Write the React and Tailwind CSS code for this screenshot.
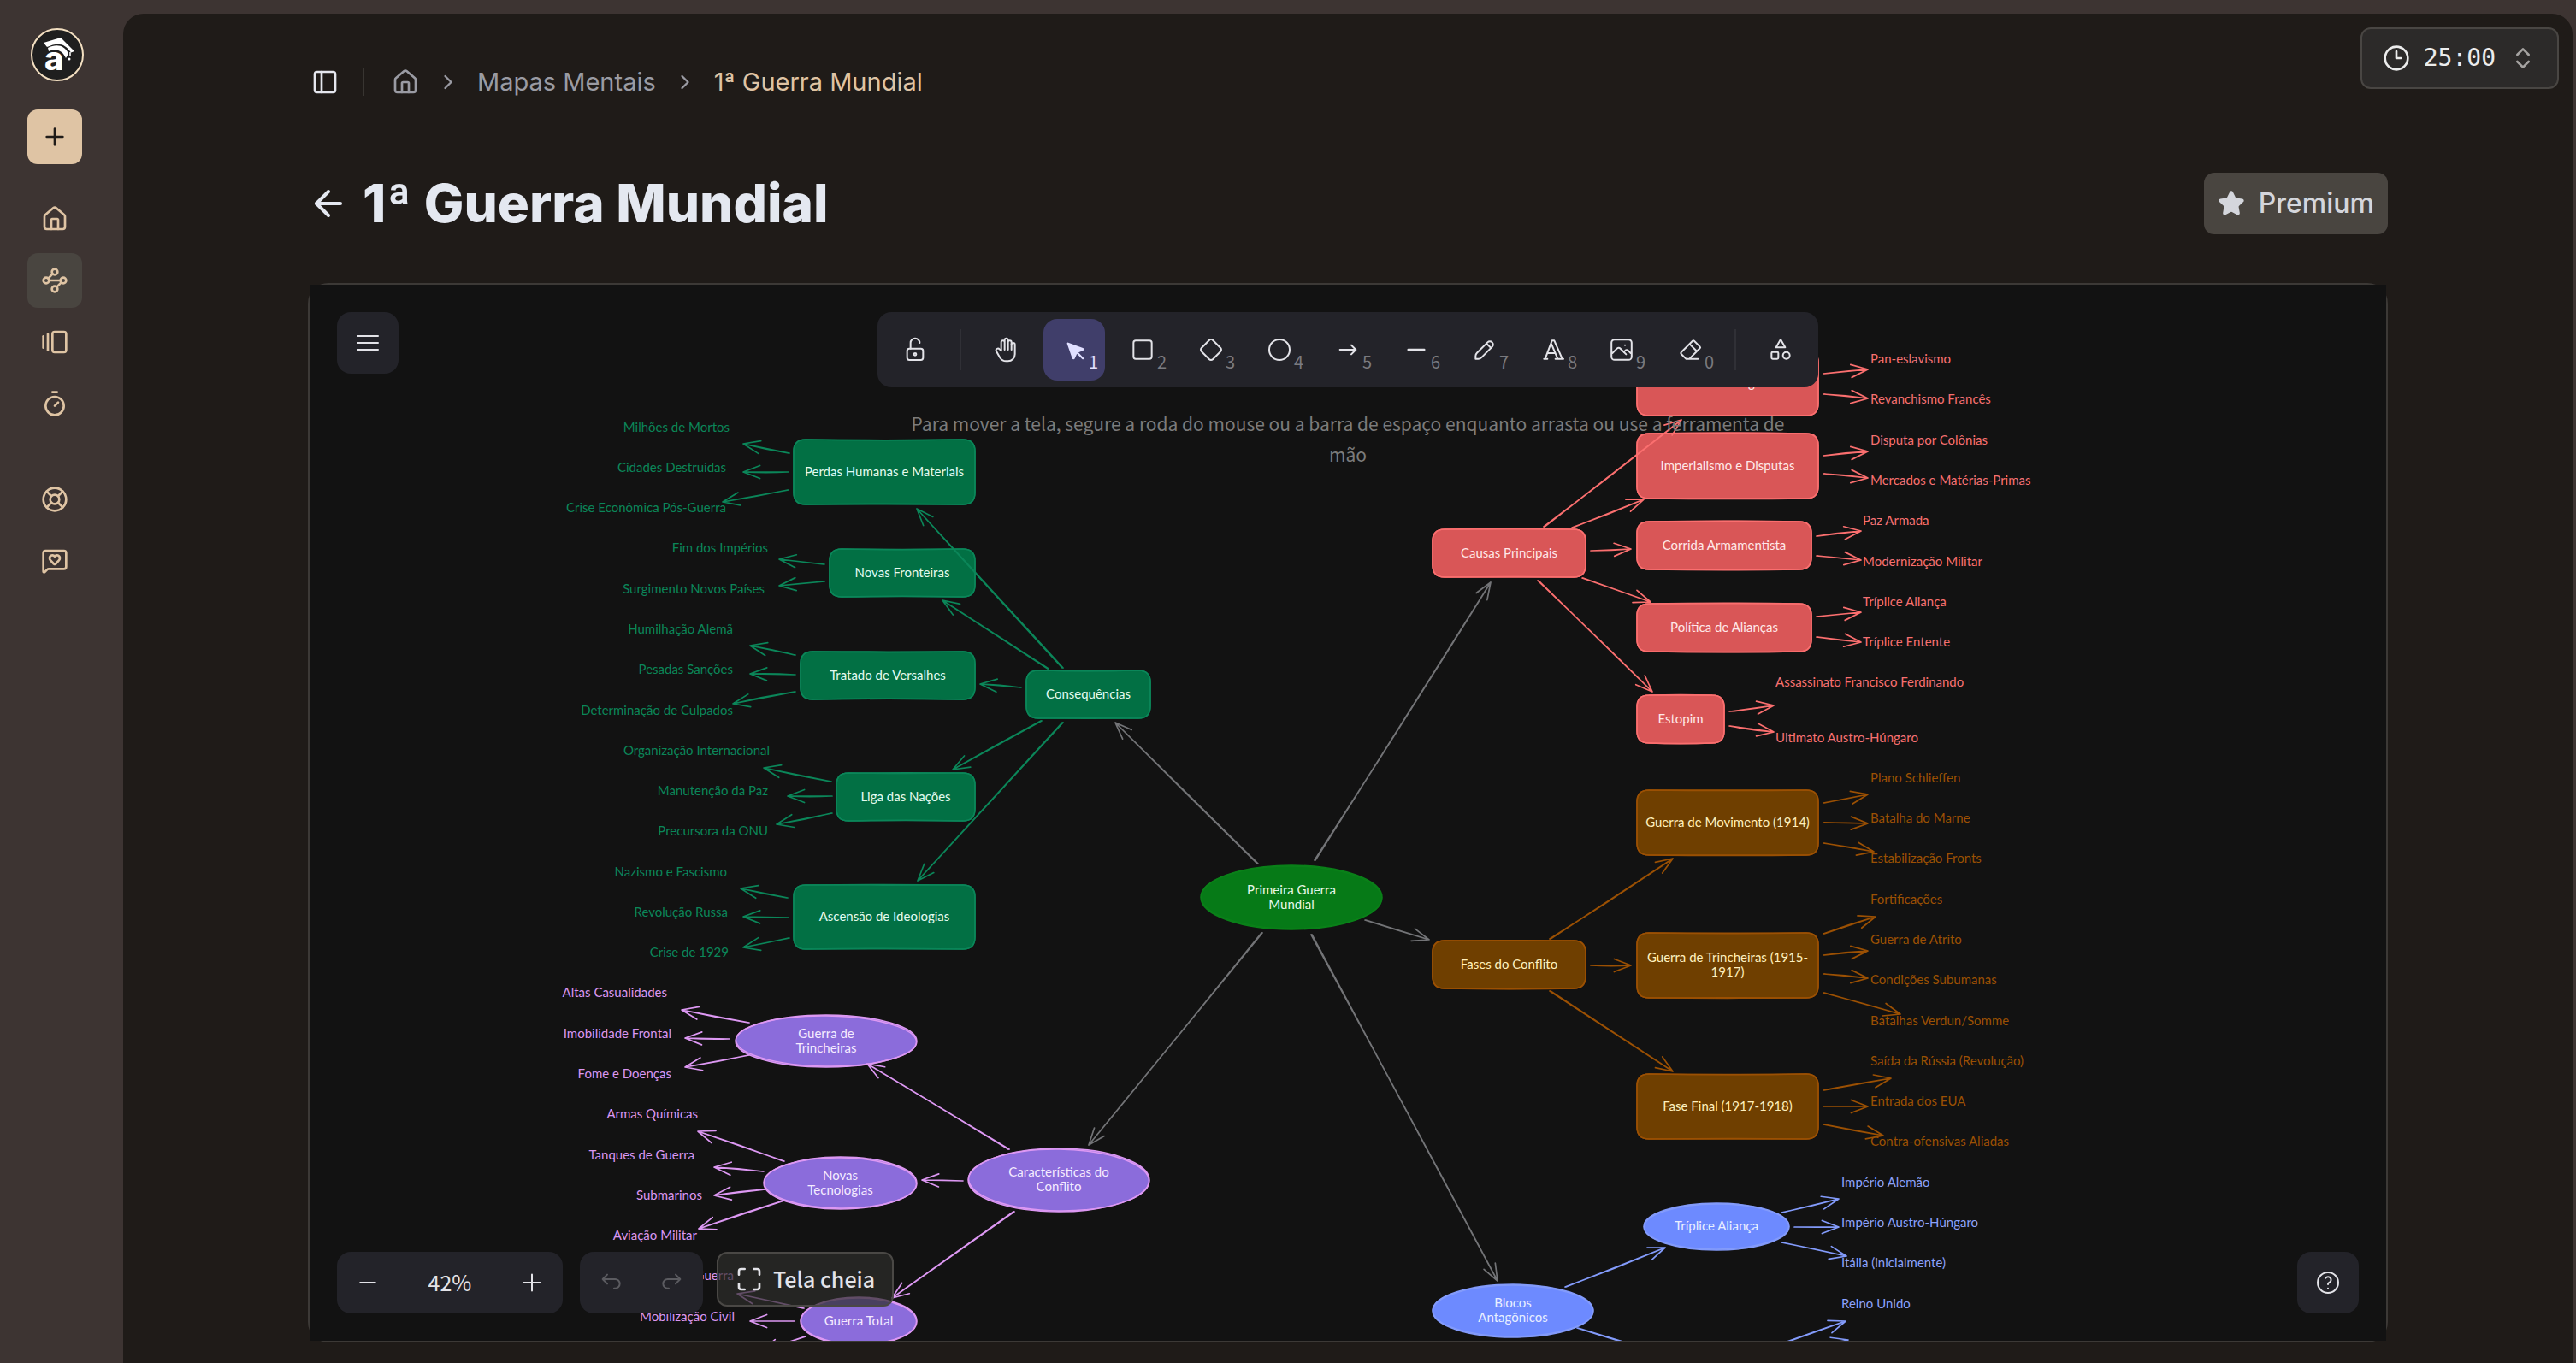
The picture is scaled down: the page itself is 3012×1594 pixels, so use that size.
import React, { useState } from 'react';
import {
  ArrowLeft,
  ChevronRight,
  ChevronsUpDown,
  Clock3,
  GalleryHorizontalEnd,
  House,
  LifeBuoy,
  Maximize,
  MessageSquareHeart,
  PanelLeft,
  Plus,
  Star,
  Timer,
  Waypoints
} from 'lucide-react';

const THEMES = {
  root: { fill: '#067a17', stroke: '#0a8019', text: 'text-[#e6f7e8]', label: 'text-[#0a8019]' },
  gray: { fill: 'none', stroke: '#737477', text: 'text-white', label: 'text-white' },
  green: { fill: '#027044', stroke: '#0b8659', text: 'text-[#e3fbf0]', label: 'text-[#0b8659]' },
  red: { fill: '#d95657', stroke: '#fb6f6f', text: 'text-[#ffe8e8]', label: 'text-[#f77070]' },
  brown: { fill: '#6f3f00', stroke: '#9b5003', text: 'text-[#fff0bd]', label: 'text-[#9b5003]' },
  purple: { fill: '#8b6cdb', stroke: '#dd98f3', text: 'text-[#f5ebff]', label: 'text-[#d996f0]' },
  blue: { fill: '#6d8aff', stroke: '#839bfb', text: 'text-[#e9efff]', label: 'text-[#8ba1fb]' }
};

// Scene coordinates: x, y, width, height
const NODES = [
  { shape: 'ellipse', theme: 'root', box: [1404, 1012, 212, 75], lines: ['Primeira Guerra', 'Mundial'] },

  { shape: 'rect', theme: 'green', box: [1200, 784, 145, 56], lines: ['Consequências'] },
  { shape: 'rect', theme: 'green', box: [928, 514, 212, 76], lines: ['Perdas Humanas e Materiais'] },
  { shape: 'rect', theme: 'green', box: [970, 642, 170, 56], lines: ['Novas Fronteiras'] },
  { shape: 'rect', theme: 'green', box: [936, 762, 204, 56], lines: ['Tratado de Versalhes'] },
  { shape: 'rect', theme: 'green', box: [978, 904, 162, 56], lines: ['Liga das Nações'] },
  { shape: 'rect', theme: 'green', box: [928, 1035, 212, 75], lines: ['Ascensão de Ideologias'] },

  { shape: 'rect', theme: 'red', box: [1675, 619, 179, 56], lines: ['Causas Principais'] },
  { shape: 'rect', theme: 'red', box: [1914, 410, 212, 76], lines: ['Nacionalismo Agressivo'] },
  { shape: 'rect', theme: 'red', box: [1914, 507, 212, 76], lines: ['Imperialismo e Disputas'] },
  { shape: 'rect', theme: 'red', box: [1914, 610, 204, 56], lines: ['Corrida Armamentista'] },
  { shape: 'rect', theme: 'red', box: [1914, 706, 204, 56], lines: ['Política de Alianças'] },
  { shape: 'rect', theme: 'red', box: [1914, 813, 102, 56], lines: ['Estopim'] },

  { shape: 'rect', theme: 'brown', box: [1675, 1100, 179, 56], lines: ['Fases do Conflito'] },
  { shape: 'rect', theme: 'brown', box: [1914, 924, 212, 76], lines: ['Guerra de Movimento (1914)'] },
  { shape: 'rect', theme: 'brown', box: [1914, 1091, 212, 76], lines: ['Guerra de Trincheiras (1915-', '1917)'] },
  { shape: 'rect', theme: 'brown', box: [1914, 1256, 212, 76], lines: ['Fase Final (1917-1918)'] },

  { shape: 'ellipse', theme: 'purple', box: [1132, 1343, 212, 74], lines: ['Características do', 'Conflito'] },
  { shape: 'ellipse', theme: 'purple', box: [860, 1187, 212, 61], lines: ['Guerra de', 'Trincheiras'] },
  { shape: 'ellipse', theme: 'purple', box: [893, 1353, 179, 61], lines: ['Novas', 'Tecnologias'] },
  { shape: 'ellipse', theme: 'purple', box: [936, 1517, 136, 56], lines: ['Guerra Total'] },

  { shape: 'ellipse', theme: 'blue', box: [1675, 1502, 188, 62], lines: ['Blocos', 'Antagônicos'] },
  { shape: 'ellipse', theme: 'blue', box: [1922, 1407, 170, 55], lines: ['Tríplice Aliança'] }
];

// Left branches are anchored on their right edge, right branches on their left edge
const LEFT_LABELS = [
  ['green', 853, 500, 'Milhões de Mortos'],
  ['green', 849, 547, 'Cidades Destruídas'],
  ['green', 849, 594, 'Crise Econômica Pós-Guerra'],
  ['green', 898, 641, 'Fim dos Impérios'],
  ['green', 894, 689, 'Surgimento Novos Países'],
  ['green', 857, 736, 'Humilhação Alemã'],
  ['green', 857, 783, 'Pesadas Sanções'],
  ['green', 857, 831, 'Determinação de Culpados'],
  ['green', 900, 878, 'Organização Internacional'],
  ['green', 898, 925, 'Manutenção da Paz'],
  ['green', 898, 972, 'Precursora da ONU'],
  ['green', 850, 1020, 'Nazismo e Fascismo'],
  ['green', 851, 1067, 'Revolução Russa'],
  ['green', 852, 1114, 'Crise de 1929'],
  ['purple', 780, 1161, 'Altas Casualidades'],
  ['purple', 785, 1209, 'Imobilidade Frontal'],
  ['purple', 785, 1256, 'Fome e Doenças'],
  ['purple', 816, 1303, 'Armas Químicas'],
  ['purple', 812, 1351, 'Tanques de Guerra'],
  ['purple', 821, 1398, 'Submarinos'],
  ['purple', 815, 1445, 'Aviação Militar'],
  ['purple', 858, 1492, 'Economia de Guerra'],
  ['purple', 859, 1540, 'Mobilização Civil']
];

const RIGHT_LABELS = [
  ['red', 2187, 420, 'Pan-eslavismo'],
  ['red', 2187, 467, 'Revanchismo Francês'],
  ['red', 2187, 515, 'Disputa por Colônias'],
  ['red', 2187, 562, 'Mercados e Matérias-Primas'],
  ['red', 2178, 609, 'Paz Armada'],
  ['red', 2178, 657, 'Modernização Militar'],
  ['red', 2178, 704, 'Tríplice Aliança'],
  ['red', 2178, 751, 'Tríplice Entente'],
  ['red', 2076, 798, 'Assassinato Francisco Ferdinando'],
  ['red', 2076, 863, 'Ultimato Austro-Húngaro'],
  ['brown', 2187, 910, 'Plano Schlieffen'],
  ['brown', 2187, 957, 'Batalha do Marne'],
  ['brown', 2187, 1004, 'Estabilização Fronts'],
  ['brown', 2187, 1052, 'Fortificações'],
  ['brown', 2187, 1099, 'Guerra de Atrito'],
  ['brown', 2187, 1146, 'Condições Subumanas'],
  ['brown', 2187, 1194, 'Batalhas Verdun/Somme'],
  ['brown', 2187, 1241, 'Saída da Rússia (Revolução)'],
  ['brown', 2187, 1288, 'Entrada dos EUA'],
  ['brown', 2187, 1335, 'Contra-ofensivas Aliadas'],
  ['blue', 2153, 1383, 'Império Alemão'],
  ['blue', 2153, 1430, 'Império Austro-Húngaro'],
  ['blue', 2153, 1477, 'Itália (inicialmente)'],
  ['blue', 2153, 1525, 'Reino Unido']
];

// [x1, y1, x2, y2], the arrow head sits on the second point
const ARROWS = {
  gray: [
    [1470, 1010, 1304, 845],
    [1537, 1006, 1743, 681],
    [1596, 1076, 1671, 1099],
    [1533, 1093, 1751, 1498],
    [1475, 1091, 1273, 1339]
  ],
  green: [
    [922, 530, 869, 519], [921, 552, 869, 552], [921, 573, 845, 587],
    [963, 660, 911, 654], [963, 680, 911, 685],
    [929, 766, 877, 755], [929, 789, 877, 788], [929, 809, 857, 823],
    [1193, 804, 1146, 800], [1225, 782, 1102, 702], [1242, 781, 1072, 595],
    [1217, 843, 1114, 900], [1242, 845, 1073, 1030],
    [971, 914, 893, 898], [972, 931, 921, 931], [972, 951, 908, 964],
    [920, 1050, 866, 1039], [921, 1073, 869, 1072], [922, 1097, 869, 1108]
  ],
  red: [
    [1805, 616, 1966, 491], [1838, 617, 1922, 584], [1860, 644, 1907, 642],
    [1850, 676, 1930, 704], [1798, 679, 1932, 809],
    [2132, 437, 2184, 432], [2132, 461, 2184, 466], [2132, 533, 2184, 528], [2132, 554, 2184, 559],
    [2124, 627, 2176, 621], [2124, 650, 2176, 655], [2124, 721, 2176, 716], [2124, 745, 2176, 751],
    [2022, 832, 2074, 825], [2022, 849, 2074, 856]
  ],
  brown: [
    [1812, 1098, 1956, 1004], [1860, 1129, 1907, 1129], [1812, 1159, 1956, 1253],
    [2132, 939, 2184, 929], [2132, 962, 2184, 963], [2132, 986, 2191, 996],
    [2132, 1092, 2193, 1072], [2132, 1117, 2184, 1112], [2132, 1139, 2184, 1144], [2132, 1161, 2222, 1186],
    [2132, 1275, 2211, 1261], [2132, 1294, 2184, 1294], [2132, 1315, 2202, 1328]
  ],
  purple: [
    [875, 1196, 797, 1181], [852, 1215, 801, 1214], [875, 1234, 801, 1248],
    [1179, 1344, 1014, 1244], [1125, 1381, 1078, 1380], [1185, 1417, 1043, 1518],
    [916, 1358, 816, 1323], [892, 1370, 835, 1365], [894, 1391, 835, 1398], [916, 1404, 817, 1437],
    [939, 1530, 862, 1513], [928, 1545, 877, 1545], [941, 1563, 890, 1580]
  ],
  blue: [
    [1830, 1505, 1947, 1459], [1844, 1553, 1960, 1588],
    [2083, 1418, 2150, 1402], [2098, 1435, 2150, 1435], [2083, 1453, 2159, 1469],
    [2084, 1571, 2158, 1545], [2098, 1582, 2161, 1567]
  ]
};

const wobble = (seed) => Math.sin(seed * 12.9898) * 1.5;

function arrowPath([x1, y1, x2, y2], seed) {
  const angle = Math.atan2(y2 - y1, x2 - x1);
  const wing = (side) => {
    const a = angle + Math.PI + (side * 21 * Math.PI) / 180;
    return `${x2 + 21 * Math.cos(a)} ${y2 + 21 * Math.sin(a)}`;
  };
  const mx = (x1 + x2) / 2 + wobble(seed);
  const my = (y1 + y2) / 2 + wobble(seed + 3);
  return [
    `M${x1} ${y1}Q${mx} ${my} ${x2} ${y2}`,
    `M${x1 + 1} ${y1}L${x2} ${y2}`,
    `M${wing(1)}L${x2} ${y2}L${wing(-1)}`
  ].join('');
}

function roughRect([x, y, w, h], seed) {
  const r = 14;
  const t = wobble(seed);
  const b = wobble(seed + 5);
  return [
    `M${x + r} ${y}Q${x + w / 2} ${y + t} ${x + w - r} ${y}Q${x + w} ${y} ${x + w} ${y + r}`,
    `L${x + w} ${y + h - r}Q${x + w} ${y + h} ${x + w - r} ${y + h}`,
    `Q${x + w / 2} ${y + h + b} ${x + r} ${y + h}Q${x} ${y + h} ${x} ${y + h - r}`,
    `L${x} ${y + r}Q${x} ${y} ${x + r} ${y}Z`
  ].join('');
}

function NodeShape({ node, seed }) {
  const { fill, stroke } = THEMES[node.theme];
  const [x, y, w, h] = node.box;
  if (node.shape === 'ellipse') {
    const cx = x + w / 2;
    const cy = y + h / 2;
    return (
      <g stroke={stroke} strokeWidth="1.5">
        <ellipse cx={cx} cy={cy} rx={w / 2} ry={h / 2} fill={fill} />
        <ellipse cx={cx} cy={cy} rx={w / 2 - 0.5} ry={h / 2 - 1} fill="none" transform={`rotate(${wobble(seed) / 2} ${cx} ${cy})`} />
      </g>
    );
  }
  return (
    <g stroke={stroke} strokeWidth="1.5">
      <path d={roughRect(node.box, seed)} fill={fill} />
      <path d={roughRect(node.box, seed + 2)} fill="none" />
    </g>
  );
}

function MindMap() {
  return (
    <div className="absolute -left-[362px] -top-[333px] h-[1600px] w-[3012px] font-[Lato,sans-serif] text-[15px] leading-[17px]">
      <svg className="absolute inset-0 h-full w-full" viewBox="0 0 3012 1600" aria-hidden="true">
        {NODES.map((node, i) => (
          <NodeShape key={i} node={node} seed={i + 1} />
        ))}
        {Object.entries(ARROWS).map(([theme, arrows]) => (
          <g key={theme} fill="none" stroke={THEMES[theme].stroke} strokeWidth="1.7" strokeLinecap="round" strokeLinejoin="round">
            {arrows.map((arrow, i) => (
              <path key={i} d={arrowPath(arrow, i + 1)} />
            ))}
          </g>
        ))}
      </svg>

      {NODES.map(({ theme, box: [x, y, w, h], lines }, i) => (
        <div
          key={i}
          className={`absolute flex flex-col items-center justify-center pb-0.5 whitespace-nowrap ${THEMES[theme].text}`}
          style={{ left: x, top: y, width: w, height: h }}
        >
          {lines.map((line) => (
            <span key={line}>{line}</span>
          ))}
        </div>
      ))}

      {LEFT_LABELS.map(([theme, x, y, text]) => (
        <div key={text} className={`absolute -translate-x-full -translate-y-1/2 pb-0.5 whitespace-nowrap ${THEMES[theme].label}`} style={{ left: x, top: y }}>
          {text}
        </div>
      ))}
      {RIGHT_LABELS.map(([theme, x, y, text]) => (
        <div key={text} className={`absolute -translate-y-1/2 pb-0.5 whitespace-nowrap ${THEMES[theme].label}`} style={{ left: x, top: y }}>
          {text}
        </div>
      ))}
    </div>
  );
}

function Icon({ size = 24, width = 1.5, children }) {
  return (
    <svg
      className="size-8"
      viewBox={`0 0 ${size} ${size}`}
      fill="none"
      stroke="currentColor"
      strokeWidth={width}
      strokeLinecap="round"
      strokeLinejoin="round"
      aria-hidden="true"
    >
      {children}
    </svg>
  );
}

const TOOLS = [
  {
    name: 'Mão',
    icon: (
      <Icon>
        <path d="M8 13v-7.5a1.5 1.5 0 0 1 3 0v6.5M11 5.5v-2a1.5 1.5 0 1 1 3 0v8.5M14 5.5a1.5 1.5 0 0 1 3 0v6.5" />
        <path d="M17 7.5a1.5 1.5 0 0 1 3 0v8.5a6 6 0 0 1-6 6h-2h.208a6 6 0 0 1-5.012-2.7a69.74 69.74 0 0 1-.196-.3c-.312-.479-1.407-2.388-3.286-5.728a1.5 1.5 0 0 1 .536-2.022a1.867 1.867 0 0 1 2.28 .28l1.47 1.47" />
      </Icon>
    )
  },
  {
    name: 'Seleção',
    shortcut: '1',
    icon: (
      <Icon size={22}>
        <path
          fill="currentColor"
          d="M6 6l4.153 11.793a.365 .365 0 0 0 .331 .207a.366 .366 0 0 0 .332-.207l2.184-4.793l4.787-1.994a.355 .355 0 0 0 .213-.323a.355 .355 0 0 0-.213-.323l-11.787-4.36z"
        />
        <path d="M13.5 13.5l4.5 4.5" />
      </Icon>
    )
  },
  { name: 'Retângulo', shortcut: '2', icon: <Icon><rect x="4" y="4" width="16" height="16" rx="2" /></Icon> },
  {
    name: 'Losango',
    shortcut: '3',
    icon: (
      <Icon>
        <path d="M10.5 20.4l-6.9-6.9c-.781-.781-.781-2.219 0-3l6.9-6.9c.781-.781 2.219-.781 3 0l6.9 6.9c.781 .781 .781 2.219 0 3l-6.9 6.9c-.781 .781-2.219 .781-3 0z" />
      </Icon>
    )
  },
  { name: 'Elipse', shortcut: '4', icon: <Icon><circle cx="12" cy="12" r="9" /></Icon> },
  { name: 'Seta', shortcut: '5', icon: <Icon><path d="M5 12h14M15 16l4-4M15 8l4 4" /></Icon> },
  { name: 'Linha', shortcut: '6', icon: <Icon size={20}><path d="M4.167 10h11.666" /></Icon> },
  {
    name: 'Desenhar',
    shortcut: '7',
    icon: (
      <Icon size={20} width={1.25}>
        <path d="m7.643 15.69 7.774-7.773a2.357 2.357 0 1 0-3.334-3.334L4.31 12.357a3.333 3.333 0 0 0-.977 2.357v1.953h1.953c.884 0 1.732-.352 2.357-.977Z" />
        <path d="m11.25 5.417 3.333 3.333" />
      </Icon>
    )
  },
  {
    name: 'Texto',
    shortcut: '8',
    icon: <Icon><path d="M4 20h3M14 20h7M6.9 15h6.9M10.2 6.3l5.8 13.7M5 20l6-16h2l7 16" /></Icon>
  },
  {
    name: 'Imagem',
    shortcut: '9',
    icon: (
      <Icon size={20} width={1.25}>
        <path d="M12.5 6.667h.01" />
        <rect x="2.625" y="2.625" width="14.75" height="14.75" rx="2.284" />
        <path d="m3.333 12.5 3.334-3.333c.773-.745 1.726-.745 2.5 0l4.166 4.166" />
        <path d="m11.667 11.667.833-.834c.774-.744 1.726-.744 2.5 0l1.667 1.667" />
      </Icon>
    )
  },
  {
    name: 'Borracha',
    shortcut: '0',
    icon: (
      <Icon>
        <path d="M19 20h-10.5l-4.21-4.3a1 1 0 0 1 0-1.41l10-10a1 1 0 0 1 1.41 0l5 5a1 1 0 0 1 0 1.41l-9.2 9.3M18 13.3l-6.3-6.3" />
      </Icon>
    )
  }
];

const toolButton = 'relative flex size-[72px] items-center justify-center rounded-2xl';

function Toolbar() {
  const [active, setActive] = useState('Seleção');

  return (
    <div className="flex items-center gap-2 rounded-2xl bg-[#232329] p-2 text-[#e3e3e8]">
      <button type="button" aria-label="Travar ferramenta" className={toolButton}>
        <Icon>
          <rect x="5" y="11" width="14" height="10" rx="2" />
          <circle cx="12" cy="16" r="1" />
          <path d="M8 11V6a4 4 0 0 1 8 0" />
        </Icon>
      </button>
      <span className="mx-2 h-12 w-0.5 bg-[#303036]" />
      {TOOLS.map(({ name, shortcut, icon }) => (
        <button
          key={name}
          type="button"
          aria-label={name}
          aria-pressed={active === name}
          onClick={() => setActive(name)}
          className={`${toolButton} ${active === name ? 'bg-[#403e6a] text-[#e0dfff]' : ''}`}
        >
          {icon}
          {shortcut && (
            <span className={`absolute right-2 bottom-2.5 text-xl leading-6 ${active === name ? 'text-[#e0dfff]' : 'text-[#7a7a7f]'}`}>
              {shortcut}
            </span>
          )}
        </button>
      ))}
      <span className="mx-2 h-12 w-0.5 bg-[#303036]" />
      <button type="button" aria-label="Mais ferramentas" className={toolButton}>
        <Icon>
          <path d="M12 3l-4 7h8z" />
          <circle cx="17" cy="17" r="3" />
          <rect x="4" y="14" width="6" height="6" rx="1" />
        </Icon>
      </button>
    </div>
  );
}

function Canvas() {
  const [zoom, setZoom] = useState(42);

  return (
    <div className="mt-[55px] flex min-h-0 flex-1 rounded-3xl border-2 border-[#3c3936]">
      <div className="relative flex-1 overflow-hidden bg-[#121212] font-['Noto_Sans_CJK_JP',sans-serif]">
        <MindMap />

        <div className="absolute top-8 left-8">
          <button type="button" aria-label="Menu" className="flex size-[72px] items-center justify-center rounded-2xl bg-[#232329] text-[#e3e3e8]">
            <Icon>
              <path d="M3 6h18M3 12h18M3 18h18" />
            </Icon>
          </button>
        </div>

        <div className="pointer-events-none absolute inset-x-0 top-8 flex justify-center">
          <div className="pointer-events-auto flex flex-col">
            <Toolbar />
            <p className="mt-6 w-0 min-w-full px-7 text-center text-[21px] leading-9 text-[#7b7b7b]">
              Para mover a tela, segure a roda do mouse ou a barra de espaço enquanto arrasta ou use a ferramenta de mão
            </p>
          </div>
        </div>

        <div className="absolute inset-x-8 bottom-8 flex items-start text-[25px] text-[#e3e3e8]">
          <div className="flex h-[72px] w-[264px] items-center rounded-2xl bg-[#232329]">
            <button type="button" aria-label="Diminuir zoom" onClick={() => setZoom(zoom - 10)} className="flex size-[72px] items-center justify-center">
              <Icon size={20} width={1.25}><path d="M4.5 10h11" /></Icon>
            </button>
            <button type="button" onClick={() => setZoom(100)} className="flex-1 text-center">
              {zoom}%
            </button>
            <button type="button" aria-label="Aumentar zoom" onClick={() => setZoom(zoom + 10)} className="flex size-[72px] items-center justify-center">
              <Icon size={20} width={1.25}><path d="M10 4v12M4 10h12" /></Icon>
            </button>
          </div>
          <div className="ml-5 flex rounded-2xl bg-[#232329] text-[#5b5b60]">
            <button type="button" aria-label="Desfazer" className="flex size-[72px] items-center justify-center">
              <Icon size={20} width={1.25}>
                <path d="M7.5 10.833 4.167 7.5 7.5 4.167M4.167 7.5h9.166a3.333 3.333 0 0 1 0 6.667H12.5" />
              </Icon>
            </button>
            <button type="button" aria-label="Refazer" className="flex size-[72px] items-center justify-center">
              <Icon size={20} width={1.25}>
                <path d="M12.5 10.833 15.833 7.5 12.5 4.167M15.833 7.5H6.667a3.333 3.333 0 1 0 0 6.667H7.5" />
              </Icon>
            </button>
          </div>
          <button
            type="button"
            className="ml-4 flex h-16 items-center gap-3 rounded-xl border-2 border-[#4a4845] bg-[#2d2d2b]/70 px-5 font-medium"
          >
            <Maximize className="size-8" />
            Tela cheia
          </button>
          <button type="button" aria-label="Ajuda" className="ml-auto flex size-[72px] items-center justify-center rounded-2xl bg-[#232329]">
            <Icon>
              <circle cx="12" cy="12" r="9" />
              <path d="M12 17v.01M12 13.5a1.5 1.5 0 0 1 1-1.5 2.6 2.6 0 1 0-3-4" />
            </Icon>
          </button>
        </div>
      </div>
    </div>
  );
}

function Logo() {
  return (
    <svg className="ml-1 size-[62px]" viewBox="0 0 62 62" role="img" aria-label="Logo">
      <circle cx="31" cy="31" r="30" fill="#1f1f1f" stroke="#f3dfc1" strokeWidth="2" />
      <text x="16" y="49" fontFamily="Inter, sans-serif" fontWeight="800" fontSize="38" fill="#fff">a</text>
      <path d="M15 17 35 11l16 16-4 1.500C40 18 32 16 19 22Z" fill="#fff" />
      <path d="M20 23c10-5 20-3 24 7l-3 5c-4-9-11-12-20-8Z" fill="#fff" />
      <path d="M46 28v5" stroke="#fff" strokeWidth="1.500" />
      <circle cx="45" cy="36" r="1.500" fill="#fff" />
    </svg>
  );
}

const MAIN_LINKS = [
  { name: 'Início', icon: House },
  { name: 'Mapas Mentais', icon: Waypoints, active: true },
  { name: 'Flashcards', icon: GalleryHorizontalEnd },
  { name: 'Cronômetro', icon: Timer }
];

const HELP_LINKS = [
  { name: 'Suporte', icon: LifeBuoy },
  { name: 'Feedback', icon: MessageSquareHeart }
];

function SidebarLinks({ links }) {
  return (
    <ul className="flex flex-col gap-2">
      {links.map(({ name, icon: LinkIcon, active }) => (
        <li key={name}>
          <a
            href="#"
            aria-label={name}
            className={`flex size-16 items-center justify-center rounded-xl text-[#dfc4a4] ${active ? 'bg-[#494540]' : ''}`}
          >
            <LinkIcon className="size-8" />
          </a>
        </li>
      ))}
    </ul>
  );
}

function Sidebar() {
  return (
    <nav className="flex w-36 shrink-0 flex-col px-8 pt-[17px]">
      <Logo />
      <button type="button" aria-label="Novo" className="mt-[33px] flex size-16 shrink-0 items-center justify-center rounded-xl bg-[#dfc4a4] text-[#1f1b18]">
        <Plus className="size-8" />
      </button>
      <div className="mt-8 flex flex-col gap-12">
        <SidebarLinks links={MAIN_LINKS} />
        <SidebarLinks links={HELP_LINKS} />
      </div>
    </nav>
  );
}

export default function App() {
  return (
    <div className="flex h-screen bg-[#3d3432] pt-4 pr-1 font-[Inter,sans-serif]">
      <Sidebar />
      <main className="relative flex min-w-0 flex-1 flex-col rounded-t-3xl bg-[#1f1b18] pt-10 pb-6">
        <button
          type="button"
          className="absolute top-4 right-4 flex h-[72px] items-center gap-4 rounded-xl border-2 border-[#494643] bg-[#2c2a29] px-6 font-['DejaVu_Sans_Mono',monospace] text-[28px] text-[#ececec]"
        >
          <Clock3 className="size-8" />
          25:00
          <ChevronsUpDown className="size-8 text-[#a5a3a1]" />
        </button>

        <div className="mx-auto flex min-h-0 w-full max-w-[2432px] flex-1 flex-col">
          <div className="flex h-20 items-center text-[29px]">
            <button type="button" aria-label="Alternar menu lateral" className="flex size-10 items-center justify-center text-[#e5e7ee]">
              <PanelLeft className="size-8" />
            </button>
            <span className="mr-8 ml-6 h-8 w-0.5 bg-[#383531]" />
            <nav aria-label="Trilha" className="flex items-center gap-5 text-[#9a9ba3]">
              <a href="#" aria-label="Início"><House className="size-8" /></a>
              <ChevronRight className="size-7" />
              <a href="#">Mapas Mentais</a>
              <ChevronRight className="size-7" />
              <span aria-current="page" className="text-[#dfc4a4]">1ª Guerra Mundial</span>
            </nav>
          </div>

          <div className="mt-16 flex h-[76px] items-center justify-between">
            <div className="flex items-center gap-4 text-[#e4e8f0]">
              <a href="#" aria-label="Voltar"><ArrowLeft className="size-12" /></a>
              <h1 className="text-[62px] leading-none font-extrabold">1ª Guerra Mundial</h1>
            </div>
            <button type="button" className="flex h-[72px] items-center gap-4 rounded-xl bg-[#494540] px-4 text-[32px] font-medium text-[#d4d6dc]">
              <Star className="size-8" fill="currentColor" />
              Premium
            </button>
          </div>

          <Canvas />
        </div>
      </main>
    </div>
  );
}
